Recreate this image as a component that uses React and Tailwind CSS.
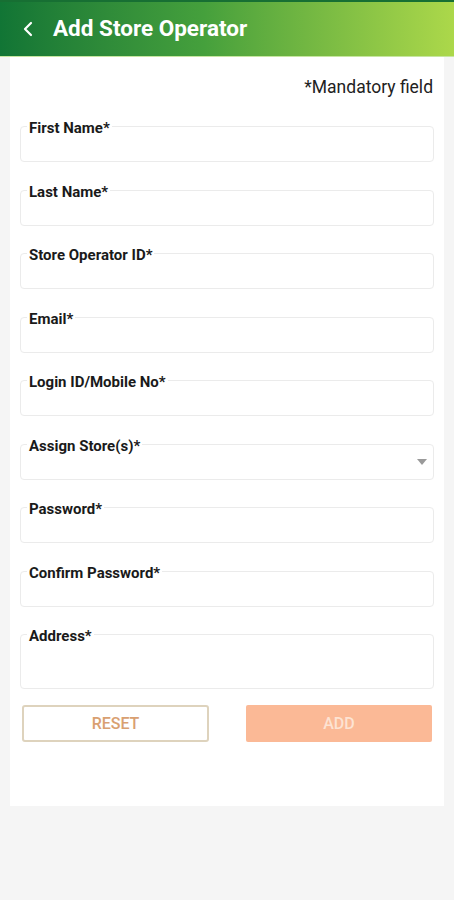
import React from "react";

const fields = [
  { label: "First Name*" },
  { label: "Last Name*" },
  { label: "Store Operator ID*" },
  { label: "Email*" },
  { label: "Login ID/Mobile No*" },
  { label: "Assign Store(s)*", select: true },
  { label: "Password*" },
  { label: "Confirm Password*" },
];

function Field({ label, select, tall }) {
  return (
    <div className={`relative rounded border border-[#ebebeb] bg-white ${tall ? "h-[55px]" : "h-[36px]"}`}>
      <span className="absolute -top-[7px] left-[6px] bg-white px-[2px] text-[15px] leading-[16px] font-bold text-[#1a1a1a]">
        {label}
      </span>
      {select && (
        <svg className="absolute right-[6px] top-[14px]" width="10" height="6" viewBox="0 0 10 6">
          <path d="M0 0h10L5 6z" fill="#9a9a9a" />
        </svg>
      )}
    </div>
  );
}

export default function App() {
  return (
    <div className="min-h-[900px] bg-[#f5f5f5]" style={{ fontFamily: "Roboto, 'Liberation Sans', sans-serif" }}>
      <div className="h-[57px] border-t-2 border-[#176f33] bg-gradient-to-r from-[#117535] via-[#45a03c] via-45% to-[#acd84a] flex items-center border-b border-b-[#c7e6a0]">
        <svg className="ml-[22px]" width="12" height="16" viewBox="0 0 12 16">
          <path d="M9 2L3 8l6 6" stroke="#fff" strokeWidth="2.2" fill="none" strokeLinecap="round" strokeLinejoin="round" />
        </svg>
        <h1 className="ml-[19px] text-[22.5px] font-bold text-white">Add Store Operator</h1>
      </div>
      <div className="mx-[10px] bg-white px-[10px] pt-[20px] pb-[64px]">
        <p className="text-right text-[17.5px] leading-[20px] text-[#222] pr-[1px]">*Mandatory field</p>
        <div className="mt-[29px] flex flex-col gap-[27.5px]">
          {fields.map((f) => (
            <Field key={f.label} {...f} />
          ))}
          <Field label="Address*" tall />
        </div>
        <div className="mt-[16px] flex justify-between px-[2px]">
          <button className="h-[37px] w-[187px] rounded-[3px] border-2 border-[#ded3bd] bg-white text-[16px] font-medium text-[#d9a071]">
            RESET
          </button>
          <button className="h-[37px] w-[186px] rounded-[2px] bg-[#fbb996] text-[16px] font-medium text-[#fde3d3]">
            ADD
          </button>
        </div>
      </div>
    </div>
  );
}
